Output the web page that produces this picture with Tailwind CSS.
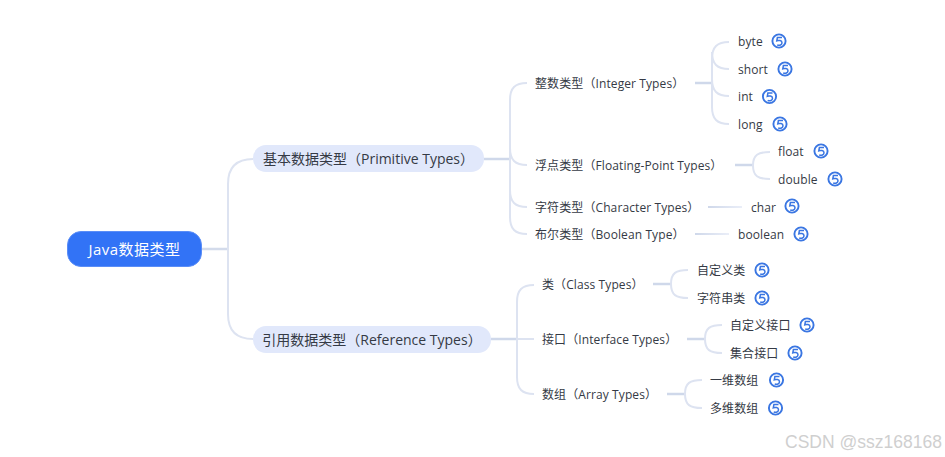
<!DOCTYPE html>
<html lang="zh">

<head>
    <meta charset="UTF-8" />
    <title>Java数据类型</title>
    <script src="https://cdn.jsdelivr.net/npm/@tailwindcss/browser@4"></script>
</head>

<body class="bg-white">
    <!-- mind map canvas -->
    <div class="relative w-[945px] h-[457px] overflow-hidden bg-white text-[12px] tracking-[0.1px] text-[#353a45] font-['Open_Sans','Noto_Sans_CJK_SC',sans-serif]">

        <!-- connectors + icons -->
        <svg class="absolute inset-0" width="945" height="457" viewBox="0 0 945 457" fill="none">
            <defs>
                <linearGradient id="fadeChar" gradientUnits="userSpaceOnUse" x1="708" y1="0" x2="742" y2="0">
                    <stop offset="0" stop-color="#cfd8ea" />
                    <stop offset="1" stop-color="#eaeef8" />
                </linearGradient>
                <linearGradient id="fadeBool" gradientUnits="userSpaceOnUse" x1="695" y1="0" x2="729" y2="0">
                    <stop offset="0" stop-color="#cfd8ea" />
                    <stop offset="1" stop-color="#eaeef8" />
                </linearGradient>
                <g id="five">
                    <circle cx="0" cy="0" r="6.6" stroke="#3a76e2" stroke-width="1.9" fill="#fff" />
                    <path d="M3 -3.6H-1.6L-2.2 -0.2C-0.4 -1 3 -0.6 3 1.7C3 3.7 0.5 5 -1.8 3.8" stroke="#3a76e2" stroke-width="1.5" />
                </g>
            </defs>

            <!-- root -->
            <g stroke="#d3dbeb" stroke-width="2">
                <path d="M202 249H228" stroke-width="2.5" />
                <path d="M253 159C236 159 228 167 228 184V314C228 331 236 339 253 339" stroke="#dde3f1" />
            </g>

            <!-- primitive -->
            <g stroke="#dde3f1" stroke-width="2">
                <path d="M484 159H510" stroke="#cfd8ea" stroke-width="2.5" />
                <path d="M527 83C515 83 510 88 510 100V217C510 229 515 234 527 234" />
                <path d="M510 148C510 160 515 165 527 165" />
                <path d="M510 190C510 202 515 207 527 207" />
                <!-- integer -->
                <path d="M695 83H712" stroke="#cfd8ea" stroke-width="2.5" />
                <path d="M729 42C717 42 712 47 712 59V107C712 119 717 124 729 124" />
                <path d="M712 52C712 64 717 69 729 69" />
                <path d="M712 79C712 91 717 96 729 96" />
                <!-- float -->
                <path d="M735 165H753" stroke="#cfd8ea" stroke-width="2.5" />
                <path d="M770 152C758 152 753 155 753 165.500C753 176 758 179 770 179" />
                <!-- char / boolean -->
                <path d="M708 207H742" stroke="url(#fadeChar)" />
                <path d="M695 234H729" stroke="url(#fadeBool)" />
            </g>

            <!-- reference -->
            <g stroke="#dde3f1" stroke-width="2">
                <path d="M491 339H517" stroke="#cfd8ea" stroke-width="2.5" />
                <path d="M534 285C522 285 517 290 517 302V377C517 389 522 394 534 394" />
                <path d="M517 339H534" />
                <!-- class -->
                <path d="M653 284H671" stroke="#cfd8ea" stroke-width="2.5" />
                <path d="M688 270C676 270 671 273 671 284C671 295 676 298 688 298" />
                <!-- interface -->
                <path d="M687 339H705" stroke="#cfd8ea" stroke-width="2.5" />
                <path d="M722 325C710 325 705 328 705 339C705 350 710 353 722 353" />
                <!-- array -->
                <path d="M667 394H685" stroke="#cfd8ea" stroke-width="2.5" />
                <path d="M702 380C690 380 685 383 685 394C685 405 690 408 702 408" />
            </g>

            <!-- note icons -->
            <use href="#five" x="779" y="41" />
            <use href="#five" x="785" y="69" />
            <use href="#five" x="769.500" y="96.500" />
            <use href="#five" x="780" y="124" />
            <use href="#five" x="821" y="151" />
            <use href="#five" x="835" y="179" />
            <use href="#five" x="792" y="206" />
            <use href="#five" x="801" y="234" />
            <use href="#five" x="762" y="270" />
            <use href="#five" x="762" y="298" />
            <use href="#five" x="807" y="325" />
            <use href="#five" x="795" y="353" />
            <use href="#five" x="776.500" y="380" />
            <use href="#five" x="775.500" y="408" />
        </svg>

        <!-- root node -->
        <div class="absolute left-[67px] top-[231px] w-[135px] h-[36px] flex items-center justify-center rounded-[14px] border border-[#5a8df7] bg-[#3273f6] text-white text-[15px] tracking-[0.5px]">Java数据类型</div>

        <!-- level 1 -->
        <div class="absolute left-[253px] top-[145px] w-[231px] h-[27px] flex items-center justify-center rounded-[13px] bg-[#e1e8fb] text-[14px] tracking-normal whitespace-nowrap">基本数据类型（Primitive Types）</div>
        <div class="absolute left-[253px] top-[326px] w-[238px] h-[27px] flex items-center justify-center rounded-[13px] bg-[#e1e8fb] text-[14px] tracking-normal whitespace-nowrap">引用数据类型（Reference Types）</div>

        <!-- level 2 -->
        <div class="absolute left-[535px] top-[75px] h-[18px] flex items-center whitespace-nowrap">整数类型（Integer Types）</div>
        <div class="absolute left-[535px] top-[157px] h-[18px] flex items-center whitespace-nowrap">浮点类型（Floating-Point Types）</div>
        <div class="absolute left-[535px] top-[199px] h-[18px] flex items-center whitespace-nowrap">字符类型（Character Types）</div>
        <div class="absolute left-[535px] top-[226px] h-[18px] flex items-center whitespace-nowrap">布尔类型（Boolean Type）</div>
        <div class="absolute left-[542px] top-[276px] h-[18px] flex items-center whitespace-nowrap">类（Class Types）</div>
        <div class="absolute left-[542px] top-[331px] h-[18px] flex items-center whitespace-nowrap">接口（Interface Types）</div>
        <div class="absolute left-[542px] top-[386px] h-[18px] flex items-center whitespace-nowrap">数组（Array Types）</div>

        <!-- leaves -->
        <div class="absolute left-[738px] top-[33px] h-[18px] flex items-center">byte</div>
        <div class="absolute left-[738px] top-[61px] h-[18px] flex items-center">short</div>
        <div class="absolute left-[738px] top-[88px] h-[18px] flex items-center">int</div>
        <div class="absolute left-[738px] top-[116px] h-[18px] flex items-center">long</div>
        <div class="absolute left-[778px] top-[143px] h-[18px] flex items-center">float</div>
        <div class="absolute left-[778px] top-[171px] h-[18px] flex items-center">double</div>
        <div class="absolute left-[751px] top-[199px] h-[18px] flex items-center">char</div>
        <div class="absolute left-[738px] top-[226px] h-[18px] flex items-center">boolean</div>
        <div class="absolute left-[697px] top-[262px] h-[18px] flex items-center">自定义类</div>
        <div class="absolute left-[697px] top-[290px] h-[18px] flex items-center">字符串类</div>
        <div class="absolute left-[730px] top-[317px] h-[18px] flex items-center">自定义接口</div>
        <div class="absolute left-[730px] top-[345px] h-[18px] flex items-center">集合接口</div>
        <div class="absolute left-[710px] top-[372px] h-[18px] flex items-center">一维数组</div>
        <div class="absolute left-[710px] top-[400px] h-[18px] flex items-center">多维数组</div>

        <!-- watermark -->
        <div class="absolute left-[785px] top-[431px] text-[17.5px] leading-[22px] tracking-normal text-[#cfcfcf] font-['Liberation_Sans',sans-serif] whitespace-nowrap">CSDN @ssz168168</div>
    </div>
</body>

</html>
